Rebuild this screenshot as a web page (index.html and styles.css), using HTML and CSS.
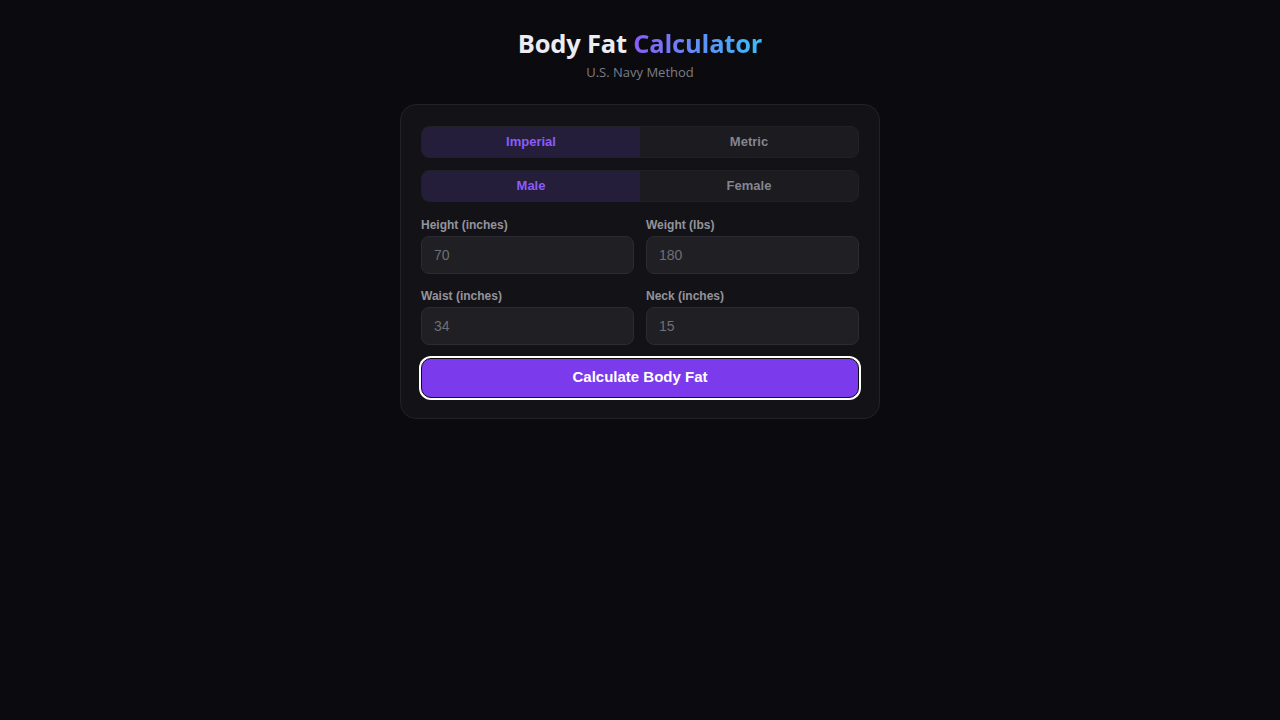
FILE: index.html
```html
<!DOCTYPE html>
<html lang="en">
<head>
<meta charset="utf-8">
<title>Body Fat Calculator</title>
<link rel="stylesheet" href="styles.css">
</head>
<body>
<main class="wrap">
  <header class="head">
    <h1 class="title">Body Fat <span class="grad">Calculator</span></h1>
    <p class="sub">U.S. Navy Method</p>
  </header>
  <section class="card">
    <div class="toggle">
      <button class="opt active">Imperial</button>
      <button class="opt">Metric</button>
    </div>
    <div class="toggle">
      <button class="opt active">Male</button>
      <button class="opt">Female</button>
    </div>
    <div class="grid">
      <label class="field"><span class="lbl">Height (inches)</span><input class="inp" placeholder="70"></label>
      <label class="field"><span class="lbl">Weight (lbs)</span><input class="inp" placeholder="180"></label>
      <label class="field"><span class="lbl">Waist (inches)</span><input class="inp" placeholder="34"></label>
      <label class="field"><span class="lbl">Neck (inches)</span><input class="inp" placeholder="15"></label>
    </div>
    <button class="calc">Calculate Body Fat</button>
  </section>
</main>
</body>
</html>
```
FILE: styles.css
```css
* { box-sizing: border-box; }
html, body { margin: 0; padding: 0; }
body {
  background: #0b0b0f;
  font-family: "Liberation Sans", Arial, sans-serif;
  color: #e5e5ea;
  min-height: 100vh;
}
.wrap {
  width: 480px;
  margin: 0 auto;
  padding-top: 27px;
}
.head { text-align: center; }
.title {
  margin: 0;
  font-family: "Open Sans", "Noto Sans", sans-serif;
  font-size: 25.5px;
  line-height: 32px;
  font-weight: 700;
  color: #ececf4;
  letter-spacing: -0.2px;
}
.grad {
  background: linear-gradient(90deg, #8b5cf6 0%, #38bdf8 100%);
  -webkit-background-clip: text;
  background-clip: text;
  color: transparent;
}
.sub {
  margin: 4px 0 0;
  font-family: "Open Sans", "Noto Sans", sans-serif;
  font-size: 13px;
  line-height: 18px;
  color: #7d7d86;
}
.card {
  margin-top: 23px;
  background: #131317;
  border: 1px solid #222228;
  border-radius: 16px;
  padding: 21px 20px 20px;
  display: flex;
  flex-direction: column;
}
.toggle {
  display: flex;
  height: 32px;
  background: #1b1b20;
  border: 1px solid #202026;
  border-radius: 8px;
  overflow: hidden;
  margin-bottom: 12px;
}
.opt {
  flex: 1;
  border: 0;
  background: transparent;
  color: #85858e;
  font-family: "Liberation Sans", Arial, sans-serif;
  font-size: 13px;
  line-height: 14px;
  font-weight: 700;
  padding: 0 0 1px;
}
.opt.active {
  background: #241e3a;
  color: #8b5cf6;
}
.grid {
  margin-top: 4px;
  display: grid;
  grid-template-columns: 1fr 1fr;
  column-gap: 12px;
  row-gap: 15px;
}
.field { display: flex; flex-direction: column; }
.lbl {
  font-size: 12px;
  line-height: 14px;
  font-weight: 700;
  color: #93939b;
  margin-bottom: 4px;
}
.inp {
  height: 38px;
  background: #1f1f24;
  border: 1px solid #2b2b31;
  border-radius: 8px;
  padding: 0 12px;
  font-family: "Liberation Sans", Arial, sans-serif;
  font-size: 14px;
  color: #e5e5ea;
  outline: none;
}
.inp::placeholder { color: #6f6f77; }
.calc {
  margin-top: 13px;
  height: 40px;
  background: #7c3aed;
  color: #ffffff;
  border: 1px solid #0d0d10;
  border-radius: 10px;
  box-shadow: 0 0 0 2px #ffffff;
  font-family: "Liberation Sans", Arial, sans-serif;
  font-size: 15px;
  line-height: 16px;
  font-weight: 700;
  padding: 0 0 2px;
}
```
